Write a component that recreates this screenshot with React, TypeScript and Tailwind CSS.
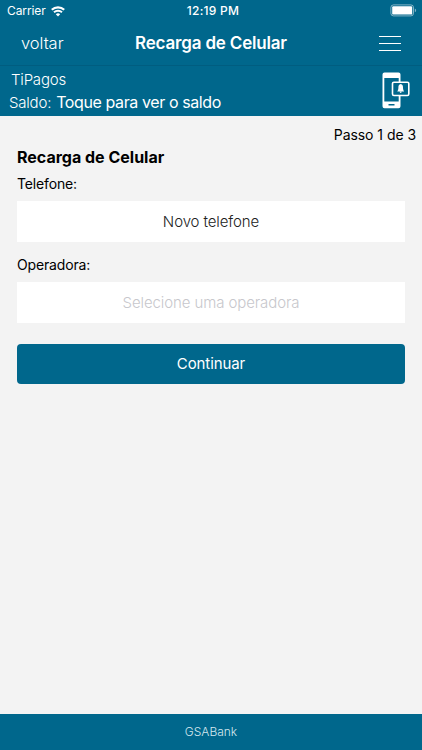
import type { ReactNode } from 'react'

function WifiIcon() {
  return (
    <svg width="14" height="11" viewBox="0 0 14 11" className="ml-[5px]" aria-hidden="true">
      <path d="M.8 3.8a8.9 8.9 0 0 1 12.4 0" fill="none" stroke="white" strokeWidth="2.2" />
      <path d="M3 6.3a5.8 5.8 0 0 1 8 0" fill="none" stroke="white" strokeWidth="1.9" />
      <path d="M7 10.6 4.8 8.3a3.2 3.2 0 0 1 4.4 0Z" fill="white" />
    </svg>
  )
}

function BatteryIcon() {
  return (
    <svg width="28" height="13" viewBox="0 0 28 13" aria-hidden="true">
      <rect x=".9" y=".9" width="22.6" height="11" rx="2.6" fill="none" stroke="white" strokeOpacity=".5" />
      <rect x="2.2" y="2.2" width="20" height="8.4" rx="1.2" fill="white" />
      <path d="M24.8 4.5c1.8.5 1.8 3.3 0 3.8Z" fill="white" fillOpacity=".5" />
    </svg>
  )
}

function PhoneAlertIcon() {
  return (
    <svg width="29" height="37" viewBox="0 0 29 37" aria-hidden="true">
      <path
        fill="white"
        fillRule="evenodd"
        d="M2.500.5h14A2 2 0 0 1 18.500 2.500V34.200a2 2 0 0 1-2 2h-14A2 2 0 0 1 .5 34.200V2.500A2 2 0 0 1 2.500.5ZM2.300 6v23.500h14.400V6ZM6.500 32v1.600h6V32Z"
      />
      <rect x="10.500" y="10.200" width="16.300" height="13.300" rx="1.400" fill="#00678c" stroke="white" strokeWidth="1.600" />
      <path d="M18.700 12c-1.900.3-2.300 1.800-2.300 3.400 0 1.900-.4 3-1.200 4h7c-.8-1-1.200-2.100-1.200-4 0-1.600-.4-3.100-2.300-3.400ZM17.700 19.800h2c0 1.500-2 1.500-2 0Z" fill="white" />
    </svg>
  )
}

function StatusBar() {
  return (
    <div className="grid h-[22px] grid-cols-3 items-center pl-[7px] pr-[4px] text-[12px]">
      <div className="flex items-center">
        <span className="tracking-[-0.1px]">Carrier</span>
        <WifiIcon />
      </div>
      <span className="pl-[1px] text-center font-medium tracking-[0.25px]">12:19 PM</span>
      <div className="-mt-[2px] flex justify-end">
        <BatteryIcon />
      </div>
    </div>
  )
}

interface FieldProps {
  label: string
  children: ReactNode
}

function Field({ label, children }: FieldProps) {
  return (
    <div>
      <div className="h-[26px] text-[14px] leading-[18px] tracking-[-0.15px]">{label}</div>
      <button
        type="button"
        className="block h-[41px] w-full bg-white pt-[2px] text-[15px] font-light tracking-[-0.1px]"
      >
        {children}
      </button>
    </div>
  )
}

export default function App() {
  return (
    <div className="flex h-[750px] w-[422px] flex-col overflow-hidden bg-[#f3f3f3] font-['Inter',sans-serif] text-black">
      <header className="h-[116px] shrink-0 bg-[#00678c] text-white">
        <StatusBar />
        <div className="grid h-[44px] grid-cols-[100px_1fr_100px] items-center border-b border-[#005d80]">
          <button type="button" className="pl-[21px] text-left text-[16.5px] font-[350] tracking-[-0.05px]">
            voltar
          </button>
          <h1 className="text-center text-[17px] font-semibold tracking-[-0.18px]">Recarga de Celular</h1>
          <button type="button" aria-label="Menu" className="-mt-px flex flex-col items-end gap-[6px] pr-[21px]">
            <span className="h-px w-[22px] bg-white" />
            <span className="h-px w-[22px] bg-white" />
            <span className="h-px w-[22px] bg-white" />
          </button>
        </div>
        <div className="flex justify-between pl-[9px] pr-[11px] pt-[3px]">
          <div>
            <div className="pl-[2px] text-[15px] font-[350] leading-[22px] tracking-[-0.2px]">TiPagos</div>
            <div className="flex items-baseline gap-[5px] leading-[22px]">
              <span className="text-[15px] font-[350] tracking-[-0.2px]">Saldo:</span>
              <span className="text-[16px] tracking-[-0.4px]">Toque para ver o saldo</span>
            </div>
          </div>
          <div className="pt-[3px]">
            <PhoneAlertIcon />
          </div>
        </div>
      </header>

      <main className="flex-1">
        <p className="pr-[6px] pt-[10px] text-right text-[14px] leading-[18px] tracking-[-0.05px]">Passo 1 de 3</p>
        <div className="px-[17px] pt-[3px]">
          <h2 className="h-[28px] text-[16px] font-bold leading-[20px]">Recarga de Celular</h2>
          <Field label="Telefone:">
            <span className="text-[#222]">Novo telefone</span>
          </Field>
          <div className="mt-[14px]">
            <Field label="Operadora:">
              <span className="text-[#c7c7cc]">Selecione uma operadora</span>
            </Field>
          </div>
          <button
            type="button"
            className="mt-[21px] h-[40px] w-full rounded-[4px] bg-[#00678c] text-[15px] tracking-[-0.1px] text-white"
          >
            Continuar
          </button>
        </div>
      </main>

      <footer className="flex h-[36px] shrink-0 items-center justify-center bg-[#00678c] text-[12px] font-light text-[#d5e8ef]">
        GSABank
      </footer>
    </div>
  )
}
